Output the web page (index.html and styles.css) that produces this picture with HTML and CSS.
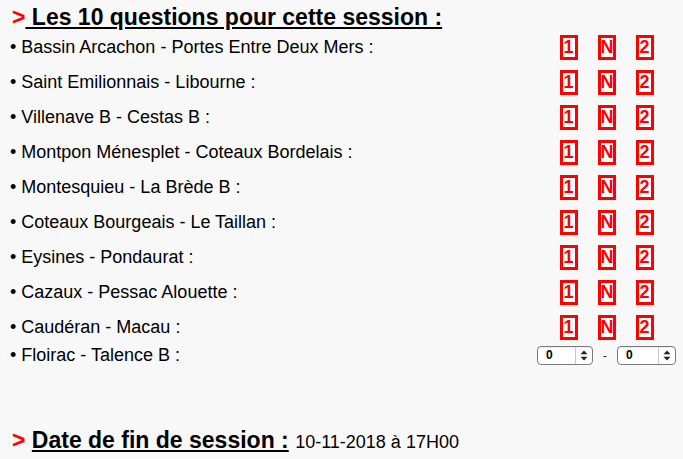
FILE: index.html
```html
<!DOCTYPE html>
<html lang="fr">
<head>
<meta charset="utf-8">
<link rel="stylesheet" href="styles.css">
</head>
<body>
<div class="page">
  <h2 class="title"><span class="gt">&gt;</span><span class="ul">&nbsp;Les 10 questions pour cette session :</span></h2>
  <div class="list">
    <div class="row"><span class="label">• Bassin Arcachon - Portes Entre Deux Mers :</span><span class="choices"><span class="pick">1</span><span class="pick">N</span><span class="pick">2</span></span></div>
    <div class="row"><span class="label">• Saint Emilionnais - Libourne :</span><span class="choices"><span class="pick">1</span><span class="pick">N</span><span class="pick">2</span></span></div>
    <div class="row"><span class="label">• Villenave B - Cestas B :</span><span class="choices"><span class="pick">1</span><span class="pick">N</span><span class="pick">2</span></span></div>
    <div class="row"><span class="label">• Montpon Ménesplet - Coteaux Bordelais :</span><span class="choices"><span class="pick">1</span><span class="pick">N</span><span class="pick">2</span></span></div>
    <div class="row"><span class="label">• Montesquieu - La Brède B :</span><span class="choices"><span class="pick">1</span><span class="pick">N</span><span class="pick">2</span></span></div>
    <div class="row"><span class="label">• Coteaux Bourgeais - Le Taillan :</span><span class="choices"><span class="pick">1</span><span class="pick">N</span><span class="pick">2</span></span></div>
    <div class="row"><span class="label">• Eysines - Pondaurat :</span><span class="choices"><span class="pick">1</span><span class="pick">N</span><span class="pick">2</span></span></div>
    <div class="row"><span class="label">• Cazaux - Pessac Alouette :</span><span class="choices"><span class="pick">1</span><span class="pick">N</span><span class="pick">2</span></span></div>
    <div class="row"><span class="label">• Caudéran - Macau :</span><span class="choices"><span class="pick">1</span><span class="pick">N</span><span class="pick">2</span></span></div>
    <div class="row row-score"><span class="label">• Floirac - Talence B :</span><span class="choices score">
      <span class="sel"><span class="val">0</span><span class="arr"><svg width="8" height="11" viewBox="0 0 8 11"><path d="M4 0.5 L7.5 4.2 H0.5 Z M4 10.5 L7.5 6.8 H0.5 Z" fill="#222"/></svg></span></span>
      <span class="dash">-</span>
      <span class="sel"><span class="val">0</span><span class="arr"><svg width="8" height="11" viewBox="0 0 8 11"><path d="M4 0.5 L7.5 4.2 H0.5 Z M4 10.5 L7.5 6.8 H0.5 Z" fill="#222"/></svg></span></span>
    </span></div>
  </div>
  <p class="end"><span class="gt">&gt;</span> <span class="ul">Date de fin de session :</span> <span class="date">10-11-2018 à 17H00</span></p>
</div>
</body>
</html>
```
FILE: styles.css
```css
html, body {
  margin: 0;
  padding: 0;
  background: #f8f8f8;
}
.page {
  font-family: "Liberation Sans", Arial, sans-serif;
  color: #000;
  padding: 4px 0 0 10px;
}
.title {
  margin: 0;
  font-size: 23px;
  font-weight: bold;
  line-height: 26px;
  height: 26px;
  padding-left: 2px;
}
.gt {
  color: #ff0000;
  font-weight: bold;
}
.ul {
  text-decoration: underline;
}
.list {
  display: flex;
  flex-direction: column;
}
.row {
  display: flex;
  align-items: center;
  height: 35px;
  font-size: 18px;
}
.row-score {
  height: 21px;
}
.label {
  flex: 1;
}
.choices {
  width: 153px;
  display: flex;
  justify-content: center;
  gap: 20px;
}
.pick {
  box-sizing: border-box;
  width: 18px;
  height: 25px;
  border: 3px solid #ff0000;
  background: #fff;
  color: #ff0000;
  font-weight: bold;
  font-size: 18px;
  line-height: 19px;
  text-align: center;
}
.score {
  gap: 0;
  align-items: center;
  padding-left: 2px;
}
.sel {
  box-sizing: border-box;
  display: flex;
  width: 56px;
  height: 19px;
  border: 1px solid #7a7a7a;
  border-radius: 4px;
  background: #fff;
  box-shadow: inset 0 1px 1px rgba(0,0,0,0.08);
}
.sel:last-child {
  width: 59px;
}
.val {
  flex: 1;
  font-size: 12px;
  font-weight: bold;
  line-height: 17px;
  padding-left: 8px;
}
.arr {
  width: 16px;
  border-left: 1px solid #c8c8c8;
  display: flex;
  align-items: center;
  justify-content: center;
}
.dash {
  width: 24px;
  text-align: center;
  font-size: 13px;
  color: #333;
}
.end {
  margin: 61px 0 0 2px;
  font-size: 23px;
  font-weight: bold;
  line-height: 26px;
}
.date {
  font-weight: normal;
  font-size: 18px;
}
```
